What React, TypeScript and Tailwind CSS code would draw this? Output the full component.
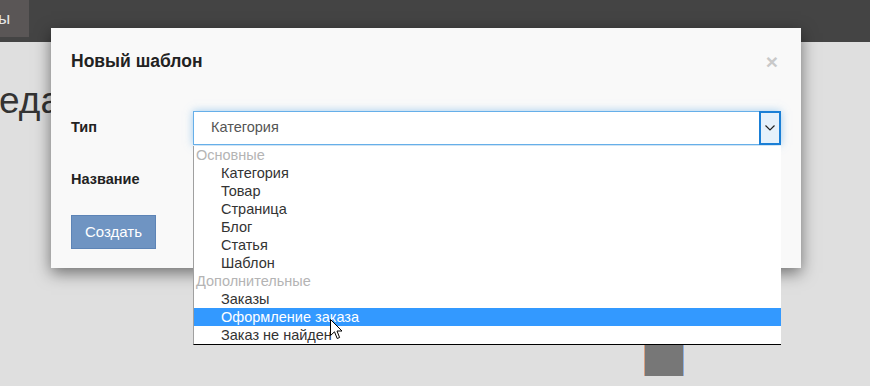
const groups = [
  { label: 'Основные', items: ['Категория', 'Товар', 'Страница', 'Блог', 'Статья', 'Шаблон'] },
  { label: 'Дополнительные', items: ['Заказы', 'Оформление заказа', 'Заказ не найден'] },
];

const selected = 'Оформление заказа';

const Cursor = () => (
  <svg width="13" height="21" viewBox="0 0 13 21" className="absolute left-[330px] top-[319px]">
    <path
      d="M0.5 0.5 L0.5 16.5 L4.5 12.8 L7.2 19.5 L9.6 18.5 L7 12 L12 12 Z"
      fill="#fff"
      stroke="#000"
      strokeWidth="1"
      strokeLinejoin="miter"
    />
  </svg>
);

const App = (): React.ReactElement => {
  return (
    <div className="relative h-[386px] w-[870px] overflow-hidden bg-[#dfdfdf] font-['Liberation_Sans',Arial,sans-serif] text-[#333]">
      {/* top nav */}
      <div className="flex h-[42px] bg-[#444]">
        <div className="flex h-[37px] w-[29px] items-center bg-[#5a5656] text-[17px] leading-none text-[#e6e6e6]">
          <span className="-ml-[2px]">ы</span>
        </div>
      </div>

      <div className="-ml-[24px] mt-[40px] text-[37px] leading-none text-[#333]">Редактирование</div>

      {/* page element peeking under the dropdown */}
      <div className="absolute left-[644px] top-[330px] h-[46px] w-[40px] border-l border-r border-l-[#d9a080] border-r-[#8aaee0] bg-[#777]" />

      {/* modal */}
      <div className="absolute left-[51px] top-[28px] flex h-[240px] w-[750px] flex-col bg-[#f9f9f9] shadow-[0_5px_15px_rgba(0,0,0,0.5)]">
        <div className="flex h-[66px] items-center justify-between pl-[20px] pr-[23px]">
          <h4 className="text-[17.5px] font-bold leading-5 text-[#222]">Новый шаблон</h4>
          <span className="text-[21px] font-bold leading-none text-[#c9c9c9]">×</span>
        </div>
        <div className="flex flex-col gap-[18px] px-[20px] pt-[17px]">
          <div className="flex h-[34px] items-center">
            <label className="w-[122px] text-[14.5px] font-bold text-[#222]">Тип</label>
            <div className="flex h-[34px] flex-1 items-stretch border border-[#66afe9] bg-white shadow-[0_0_8px_rgba(102,175,233,0.6)]">
              <span className="flex flex-1 items-center pl-[17px] text-[14.5px] text-[#555]">Категория</span>
              <span className="-my-px -mr-px flex w-[22px] items-center justify-center border-[2px] border-[#1a7fd6] bg-[#e5f1fb]">
                <svg width="10" height="6" viewBox="0 0 10 6">
                  <path d="M0.5 0.5 L5 5 L9.5 0.5" fill="none" stroke="#222" strokeWidth="1.2" />
                </svg>
              </span>
            </div>
          </div>
          <div className="flex h-[34px] items-center">
            <label className="w-[122px] text-[14.5px] font-bold text-[#222]">Название</label>
            <div className="h-[34px] flex-1 border border-[#ccc] bg-white" />
          </div>
          <div>
            <button
              type="button"
              className="h-[34px] w-[85px] border border-[#5d84b6] bg-[#6f94c2] text-[15px] text-white"
            >
              Создать
            </button>
          </div>
        </div>
      </div>

      {/* open select list */}
      <ul className="absolute left-[193px] top-[146px] w-[588px] border-b border-l border-b-black border-l-[#a0a0a0] bg-white text-[14.5px] leading-[18px]">
        {groups.map((g) => (
          <li key={g.label}>
            <div className="h-[18px] pl-[2px] text-[#b4b4b4]">{g.label}</div>
            {g.items.map((it) => (
              <div
                key={it}
                className={
                  it === selected
                    ? 'h-[18px] bg-[#3399ff] pl-[27px] text-white'
                    : 'h-[18px] pl-[27px] text-[#333]'
                }
              >
                {it}
              </div>
            ))}
          </li>
        ))}
      </ul>

      <Cursor />
    </div>
  );
};

export default App;
